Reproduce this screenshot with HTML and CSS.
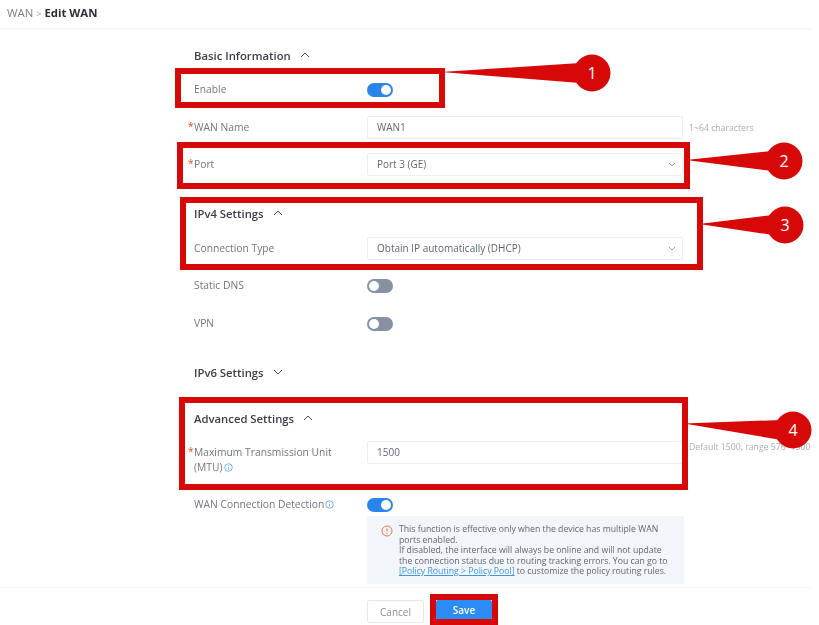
FILE: index.html
```html
<!DOCTYPE html>
<html lang="en">
<head>
    <meta charset="UTF-8">
    <meta name="viewport" content="width=device-width, initial-scale=1.0">
    <title>Edit WAN</title>
    <link rel="stylesheet" href="styles.css">
</head>
<body>
    <div class="page">
        <div class="breadcrumb">
            <span class="crumb">WAN</span>
            <span class="crumb-sep">&gt;</span>
            <strong class="crumb-current">Edit WAN</strong>
        </div>

        <div class="form">
            <!-- Basic Information -->
            <div class="section-title first">
                <span>Basic Information</span>
                <svg class="chevron" viewBox="0 0 10 6"><polyline points="1,5 5,1 9,5"/></svg>
            </div>
            <div class="row loose">
                <label class="row-label">Enable</label>
                <span class="toggle on"></span>
            </div>
            <div class="row">
                <label class="row-label required">WAN Name</label>
                <div class="input">WAN1</div>
                <span class="hint">1~64 characters</span>
            </div>
            <div class="row">
                <label class="row-label required">Port</label>
                <div class="input select">Port 3 (GE)
                    <svg class="select-arrow" viewBox="0 0 8 5"><polyline points="1,1 4,4 7,1"/></svg>
                </div>
            </div>

            <!-- IPv4 Settings -->
            <div class="section-title ipv4">
                <span>IPv4 Settings</span>
                <svg class="chevron" viewBox="0 0 10 6"><polyline points="1,5 5,1 9,5"/></svg>
            </div>
            <div class="row">
                <label class="row-label">Connection Type</label>
                <div class="input select">Obtain IP automatically (DHCP)
                    <svg class="select-arrow" viewBox="0 0 8 5"><polyline points="1,1 4,4 7,1"/></svg>
                </div>
            </div>
            <div class="row loose">
                <label class="row-label">Static DNS</label>
                <span class="toggle"></span>
            </div>
            <div class="row">
                <label class="row-label">VPN</label>
                <span class="toggle"></span>
            </div>

            <!-- IPv6 Settings -->
            <div class="section-title ipv6">
                <span>IPv6 Settings</span>
                <svg class="chevron" viewBox="0 0 10 6"><polyline points="1,1 5,5 9,1"/></svg>
            </div>

            <!-- Advanced Settings -->
            <div class="section-title advanced">
                <span>Advanced Settings</span>
                <svg class="chevron" viewBox="0 0 10 6"><polyline points="1,5 5,1 9,5"/></svg>
            </div>
            <div class="row mtu">
                <label class="row-label required">Maximum Transmission Unit (MTU)<svg class="info" viewBox="0 0 10 10"><circle cx="5" cy="5" r="4.2"/><path d="M5 4.4v3M5 2.4v1"/></svg></label>
                <div class="input">1500</div>
                <span class="hint">Default 1500, range 576~1500</span>
            </div>
            <div class="row detection">
                <label class="row-label">WAN Connection Detection<svg class="info" viewBox="0 0 10 10"><circle cx="5" cy="5" r="4.2"/><path d="M5 4.4v3M5 2.4v1"/></svg></label>
                <span class="toggle on"></span>
            </div>
            <div class="notice">
                <svg class="notice-icon" viewBox="0 0 12 12"><circle cx="6" cy="6" r="5"/><path d="M6 3.2v3.4M6 7.8v1.2"/></svg>
                <p>This function is effective only when the device has multiple WAN ports enabled.<br>If disabled, the interface will always be online and will not update the connection status due to routing tracking errors. You can go to <a href="#">[Policy Routing &gt; Policy Pool]</a> to customize the policy routing rules.</p>
            </div>
        </div>

        <div class="footer">
            <button type="button" class="button">Cancel</button>
            <button type="button" class="button primary">Save</button>
        </div>
    </div>

    <!-- Red callouts drawn over the screenshot -->
    <svg class="callouts" viewBox="0 0 819 625">
        <g class="frames">
            <rect x="178" y="71" width="264" height="34"/>
            <rect x="180" y="145" width="507" height="41"/>
            <rect x="183" y="200" width="517" height="67"/>
            <rect x="182" y="400" width="503" height="87"/>
            <rect x="433" y="597" width="62" height="25"/>
        </g>
        <g class="pins">
            <polygon points="441,72 580,63 580,83"/>
            <circle cx="592" cy="73" r="18.5"/>
            <polygon points="686,160 772,151 772,171"/>
            <circle cx="784" cy="161" r="18.5"/>
            <polygon points="699,224 773,215 773,235"/>
            <circle cx="785" cy="225" r="18.5"/>
            <polygon points="684,423.5 781,420 781,440"/>
            <circle cx="793" cy="430" r="18.5"/>
        </g>
        <g class="pin-numbers">
            <text x="592" y="79">1</text>
            <text x="784" y="167">2</text>
            <text x="785" y="231">3</text>
            <text x="793" y="436">4</text>
        </g>
    </svg>
</body>
</html>
```

FILE: styles.css
```css
html, body {
    margin: 0;
    padding: 0;
    height: 625px;
    overflow: hidden;
    background-color: #fff;
}
body {
    position: relative;
    font-family: "Open Sans", "Noto Sans", sans-serif;
    font-size: 10px;
    color: #5f6672;
}
.page {
    width: 811px;
    height: 625px;
    display: flex;
    flex-direction: column;
    filter: blur(0.35px);
}
.breadcrumb {
    height: 30px;
    box-sizing: border-box;
    padding: 5px 0 0 7px;
    border-bottom: 2px solid #f6f6f7;
    font-size: 11.4px;
    line-height: 15px;
    color: #7b8088;
    flex-shrink: 0;
}
.crumb-sep {
    font-size: 9px;
    color: #9a9ea5;
}
.crumb-current {
    color: #2b2f36;
    font-weight: 700;
}
.form {
    flex: 1;
    padding-left: 194px;
}
.section-title {
    height: 20px;
    display: flex;
    align-items: center;
    gap: 9px;
    font-size: 11.3px;
    font-weight: 600;
    color: #3a3f47;
    margin-bottom: 14px;
}
.section-title.first {
    margin-top: 15px;
    margin-bottom: 13px;
}
.section-title.ipv4 {
    margin-top: 27px;
}
.section-title.ipv6 {
    margin-top: 27px;
    margin-bottom: 0;
}
.section-title.advanced {
    margin-top: 26px;
    margin-bottom: 13px;
}
.chevron {
    width: 10px;
    height: 6px;
    fill: none;
    stroke: #4a4f57;
    stroke-width: 1;
}
.row {
    display: flex;
    align-items: center;
    height: 23px;
    margin-bottom: 14px;
}
.row.loose {
    margin-bottom: 15px;
}
.row.mtu {
    align-items: flex-start;
    height: 38px;
}
.row.detection {
    margin-bottom: 0;
}
.row-label {
    position: relative;
    width: 173px;
    flex-shrink: 0;
    font-size: 10.3px;
    line-height: 15px;
    color: #70767f;
}
.mtu .row-label {
    width: 150px;
    margin-right: 23px;
    padding-top: 4px;
}
.required::before {
    content: "*";
    position: absolute;
    left: -6px;
    top: -1px;
    color: #e0492f;
}
.mtu .required::before {
    top: 3px;
}
.info {
    width: 9px;
    height: 9px;
    margin-left: 1px;
    vertical-align: -1px;
    fill: none;
    stroke: #3f96e0;
    stroke-width: 0.8;
}
.input {
    position: relative;
    width: 316px;
    height: 23px;
    box-sizing: border-box;
    flex-shrink: 0;
    padding-left: 9px;
    border: 1px solid #eceef0;
    border-radius: 2px;
    line-height: 21px;
    color: #5f6672;
}
.select-arrow {
    position: absolute;
    right: 6px;
    top: 8px;
    width: 8px;
    height: 5px;
    fill: none;
    stroke: #9aa0a8;
    stroke-width: 1;
}
.hint {
    margin-left: 6px;
    font-size: 8.7px;
    white-space: nowrap;
    color: #a9adb3;
}
.toggle {
    position: relative;
    width: 26px;
    height: 14px;
    border-radius: 7px;
    background-color: #8791a1;
}
.toggle::after {
    content: "";
    position: absolute;
    top: 2px;
    left: 2px;
    width: 10px;
    height: 10px;
    border-radius: 50%;
    background-color: #fff;
}
.toggle.on {
    background-color: #2a84ea;
}
.toggle.on::after {
    left: 14px;
}
.notice {
    display: flex;
    width: 317px;
    height: 68px;
    box-sizing: border-box;
    margin-left: 173px;
    padding: 8px 8px 0 14px;
    background-color: #f2f5f9;
}
.notice-icon {
    width: 12px;
    height: 12px;
    flex-shrink: 0;
    margin: 1px 6px 0 0;
    fill: none;
    stroke: #e8784a;
    stroke-width: 1;
}
.notice p {
    margin: 0;
    font-size: 8.7px;
    line-height: 10.5px;
    color: #5f6672;
}
.notice a {
    color: #3f96e0;
}
.footer {
    height: 38px;
    box-sizing: border-box;
    flex-shrink: 0;
    display: flex;
    gap: 12px;
    padding: 12px 0 0 367px;
    border-top: 1px solid #f3f3f4;
}
.button {
    height: 23px;
    width: 57px;
    padding: 0;
    border: 1px solid #e6e7ea;
    border-radius: 2px;
    background-color: #fff;
    color: #8a8f96;
    font-family: inherit;
    font-size: 10px;
}
.button.primary {
    width: 56px;
    height: 20px;
    border: none;
    background-color: #2b8cf5;
    color: #fff;
    font-weight: 600;
}
.callouts {
    position: absolute;
    left: 0;
    top: 0;
    width: 819px;
    height: 625px;
}
.frames rect {
    fill: none;
    stroke: #d60808;
    stroke-width: 6;
}
.pins polygon, .pins circle {
    fill: #d60808;
}
.pin-numbers text {
    fill: #fff;
    font-family: "Open Sans", sans-serif;
    font-size: 16px;
    text-anchor: middle;
}
```
